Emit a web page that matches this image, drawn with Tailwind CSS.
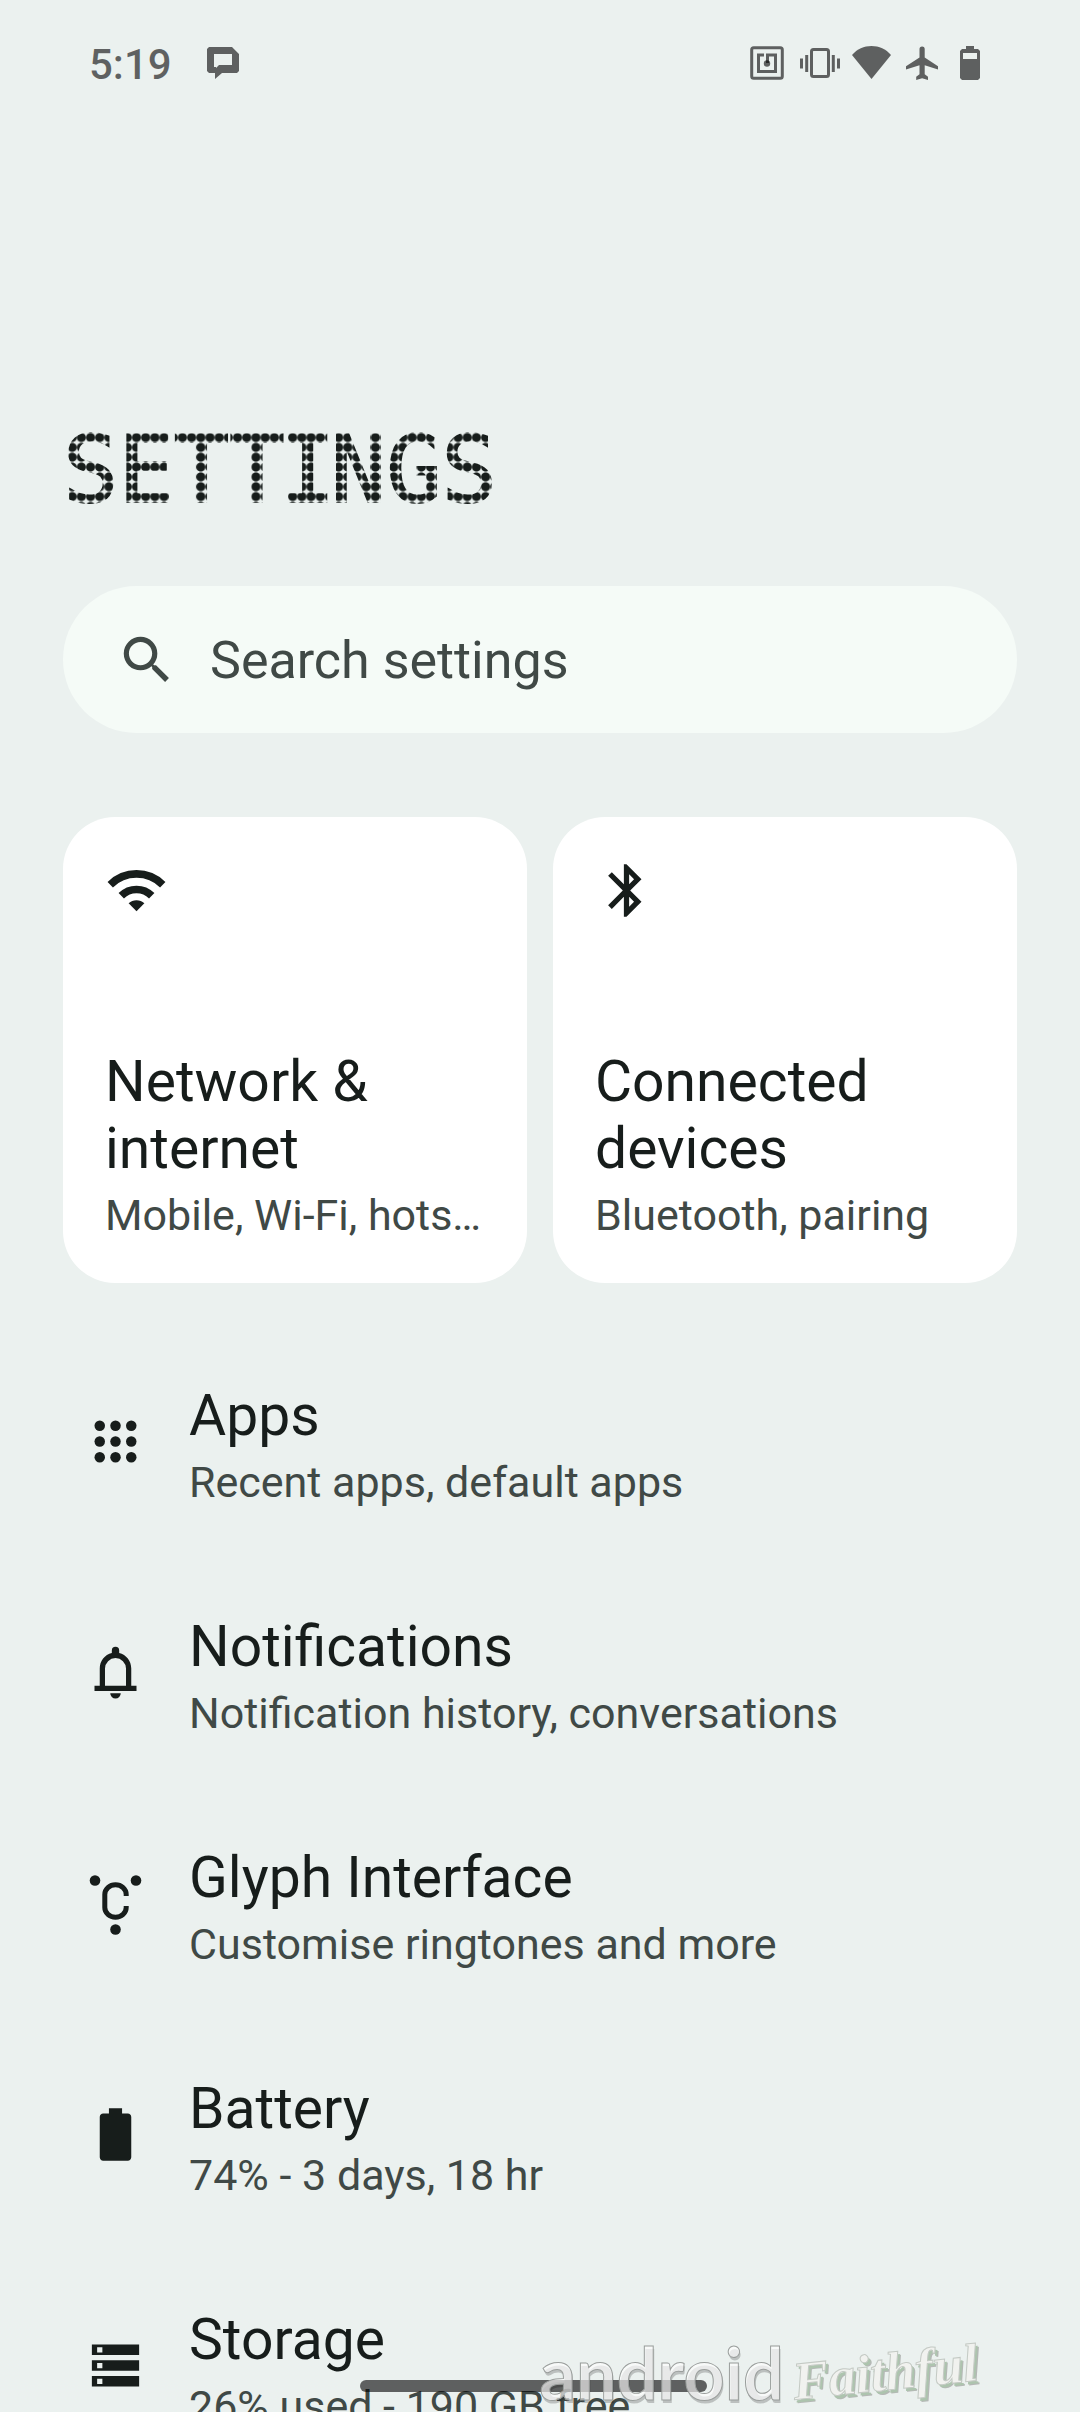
<!DOCTYPE html>
<html lang="en">
  <head>
    <meta charset="UTF-8" />
    <meta name="viewport" content="width=device-width, initial-scale=1.0" />
    <title>Settings</title>
    <script src="https://cdn.jsdelivr.net/npm/@tailwindcss/browser@4"></script>
  </head>
  <body
    class="relative h-screen overflow-hidden bg-[#ebf1ef] font-['Roboto',sans-serif] text-[#171d1b]"
  >
    <!-- Status bar -->
    <header
      class="flex h-[126px] items-center justify-between pr-[100px] pl-[89px] text-black/60"
    >
      <div class="flex items-center gap-[35px]">
        <time class="pt-1 text-[42px] leading-none font-medium">5:19</time>
        <svg class="size-8" viewBox="0 0 32 32" fill="currentColor" fill-rule="evenodd" aria-label="Messages">
          <path d="M2 0h23l7 7v17l-2 2H15l-7 6v-6H2l-2-2V2zM7 7v13h2v1l3-3h13V7z" />
        </svg>
      </div>
      <div class="flex items-center">
        <svg class="mr-4 size-[34px]" viewBox="0 0 34 34" fill="none" stroke="currentColor" stroke-width="3" aria-label="NFC">
          <rect x="1.7" y="1.7" width="30.6" height="30.6" rx="2" />
          <path d="M14 9H8.500v16.500h17V9h-8v8" />
          <circle cx="17" cy="17.500" r="3.200" fill="currentColor" stroke="none" />
        </svg>
        <svg class="mr-3 h-[34px] w-10" viewBox="0 0 40 34" fill="none" stroke="currentColor" stroke-width="3" aria-label="Vibrate">
          <rect x="11.500" y="3.500" width="17" height="27" rx="2" />
          <path d="M6.700 9v17M33.300 9v17M1.500 12.500v10M38.500 12.500v10" />
        </svg>
        <svg class="mr-[15px] h-[34px] w-[39px]" viewBox="0 0 39 34" fill="currentColor" aria-label="Wi-Fi">
          <path d="M19.500 33L0 9C5 3 12 0 19.500 0S34 3 39 9z" />
        </svg>
        <svg class="mr-[22px] h-[34px] w-8" viewBox="0 0 32 34" fill="currentColor" aria-label="Airplane mode">
          <path d="M32 23.500v-3.300L18.700 11.500V3a2.600 2.600 0 0 0-5.200 0v8.500L0 20.200v3.300l13.500-4.300v9l-3.300 2.600V34l5.900-1.800L22 34v-3.200l-3.300-2.600v-9z" />
        </svg>
        <svg class="h-[34px] w-5" viewBox="0 0 20 34" fill="currentColor" fill-rule="evenodd" aria-label="Battery">
          <path d="M6 0h8v3h4l2 2v27l-2 2H2l-2-2V5l2-2h4zM3 7v6h14V7z" />
        </svg>
      </div>
    </header>

    <main class="px-[63px]">
      <!-- Dot-matrix title: a grid of dots clipped to the letters -->
      <h1
        class="mt-[294px] bg-[radial-gradient(circle,#171d1b_4px,transparent_5px)] bg-[length:0.1em_0.107em] bg-[position:-0.05em_0.03em] bg-clip-text font-['DejaVu_Sans_Mono',monospace] text-[92px] leading-[102px] text-transparent [-webkit-text-stroke:2px_transparent]"
      >SETT<span class="-mx-[0.05em]">I</span>NGS</h1>

      <label
        class="mt-16 flex h-[147px] items-center rounded-full bg-[#f5fbf7] pl-[53px] text-[#404946]"
      >
        <svg class="mr-8 size-[62px]" viewBox="0 0 24 24" fill="currentColor" aria-hidden="true">
          <path d="M15.500 14h-.79l-.28-.27A6.471 6.471 0 0 0 16 9.500 6.500 6.500 0 1 0 9.500 16c1.610 0 3.090-.59 4.230-1.570l.27.28v.79l5 4.990L20.490 19l-4.990-5zm-6 0C7.010 14 5 11.990 5 9.500S7.010 5 9.500 5 14 7.010 14 9.500 11.990 14 9.500 14z" />
        </svg>
        <input
          type="search"
          placeholder="Search settings"
          aria-label="Search settings"
          class="min-w-0 flex-1 bg-transparent pt-0.5 text-[52px] outline-none placeholder:text-[#404946]"
        />
      </label>

      <div class="mt-[84px] grid grid-cols-2 gap-[26px]">
        <a href="#network" class="rounded-[52px] bg-white p-[42px]">
          <svg class="size-[63px]" viewBox="0 0 24 24" fill="none" stroke="currentColor" stroke-width="2.900" aria-hidden="true">
            <path d="M2 9.800a14.200 14.200 0 0 1 20 0M6.200 14a8.200 8.200 0 0 1 11.600 0" />
            <path d="M12 19.900l-3-3a4.300 4.300 0 0 1 6 0z" fill="currentColor" stroke="none" />
          </svg>
          <h2 class="mt-[126px] text-[57px] leading-[67px]">Network &amp; internet</h2>
          <p class="mt-[7px] truncate text-[43px] leading-[52px] text-[#404946]">Mobile, Wi-Fi, hotspot</p>
        </a>
        <a href="#devices" class="rounded-[52px] bg-white p-[42px]">
          <svg class="size-[63px]" viewBox="0 0 24 24" fill="currentColor" aria-hidden="true">
            <path d="M17.710 7.710L12 2h-1v7.590L6.410 5 5 6.410 10.590 12 5 17.590 6.410 19 11 14.410V22h1l5.710-5.710-4.300-4.290zM13 5.830l1.880 1.880L13 9.590zm1.880 10.460L13 18.170v-3.760z" />
          </svg>
          <h2 class="mt-[126px] text-[57px] leading-[67px]">Connected devices</h2>
          <p class="mt-[7px] truncate text-[43px] leading-[52px] text-[#404946]">Bluetooth, pairing</p>
        </a>
      </div>

      <nav class="mt-[47px]">
        <a href="#apps" class="flex h-[231px] items-start gap-[42px] px-[21px] pt-[52px]">
          <svg class="mt-7 size-[63px] shrink-0" viewBox="0 0 24 24" fill="currentColor" aria-hidden="true">
            <circle cx="6" cy="6" r="2" />
            <circle cx="12" cy="6" r="2" />
            <circle cx="18" cy="6" r="2" />
            <circle cx="6" cy="12" r="2" />
            <circle cx="12" cy="12" r="2" />
            <circle cx="18" cy="12" r="2" />
            <circle cx="6" cy="18" r="2" />
            <circle cx="12" cy="18" r="2" />
            <circle cx="18" cy="18" r="2" />
          </svg>
          <div>
            <h2 class="text-[57px] leading-[67px]">Apps</h2>
            <p class="mt-[7px] text-[43px] leading-[52px] text-[#404946]">Recent apps, default apps</p>
          </div>
        </a>
        <a href="#notifications" class="flex h-[231px] items-start gap-[42px] px-[21px] pt-[52px]">
          <svg class="mt-7 size-[63px] shrink-0" viewBox="0 0 24 24" fill="currentColor" aria-hidden="true">
            <path d="M18 17v-6.500c0-2.870-1.900-5.270-4.600-5.900V3.600a1.400 1.400 0 0 0-2.800 0v1C7.900 5.230 6 7.630 6 10.500V17H4v2h16v-2zM8 17v-6.500a4 4 0 0 1 8 0V17zM10 19.900h4a2 2 0 0 1-4 0z" />
          </svg>
          <div>
            <h2 class="text-[57px] leading-[67px]">Notifications</h2>
            <p class="mt-[7px] text-[43px] leading-[52px] text-[#404946]">Notification history, conversations</p>
          </div>
        </a>
        <a href="#glyph" class="flex h-[231px] items-start gap-[42px] px-[21px] pt-[52px]">
          <svg class="mt-7 size-[63px] shrink-0" viewBox="0 0 63 63" fill="currentColor" aria-hidden="true">
            <circle cx="11" cy="8.500" r="5.300" />
            <circle cx="52" cy="8.500" r="5.300" />
            <circle cx="31.500" cy="57.500" r="5.300" />
            <path d="M42.200 24v-1.500a10.700 9.700 0 0 0-21.400 0v13a10.700 9.700 0 0 0 21.400 0V34" fill="none" stroke="currentColor" stroke-width="5" />
          </svg>
          <div>
            <h2 class="text-[57px] leading-[67px]">Glyph Interface</h2>
            <p class="mt-[7px] text-[43px] leading-[52px] text-[#404946]">Customise ringtones and more</p>
          </div>
        </a>
        <a href="#battery" class="flex h-[231px] items-start gap-[42px] px-[21px] pt-[52px]">
          <svg class="mt-7 size-[63px] shrink-0" viewBox="0 0 24 24" fill="currentColor" aria-hidden="true">
            <path d="M16.700 4h-2.200V2h-5v2H7.300C6.600 4 6 4.600 6 5.300v15.400c0 .7.600 1.300 1.300 1.300h9.400c.7 0 1.300-.6 1.300-1.300V5.300c0-.7-.6-1.300-1.300-1.300z" />
          </svg>
          <div>
            <h2 class="text-[57px] leading-[67px]">Battery</h2>
            <p class="mt-[7px] text-[43px] leading-[52px] text-[#404946]">74% - 3 days, 18 hr</p>
          </div>
        </a>
        <a href="#storage" class="flex h-[231px] items-start gap-[42px] px-[21px] pt-[52px]">
          <svg class="mt-7 size-[63px] shrink-0" viewBox="0 0 24 24" fill="currentColor" fill-rule="evenodd" aria-hidden="true">
            <path d="M3 4h18v4H3zM5 5v2h2V5zM3 10h18v4H3zM5 11v2h2v-2zM3 16h18v4H3zM5 17v2h2v-2z" />
          </svg>
          <div>
            <h2 class="text-[57px] leading-[67px]">Storage</h2>
            <p class="mt-[7px] text-[43px] leading-[52px] text-[#404946]">26% used - 190 GB free</p>
          </div>
        </a>
      </nav>
    </main>

    <!-- Gesture bar -->
    <div class="absolute bottom-5 left-1/3 h-3 w-[347px] rounded-full bg-black/60"></div>

    <!-- Watermark -->
    <div class="absolute right-[102px] bottom-0 flex items-end gap-2 whitespace-nowrap">
      <span
        class="font-['Lato',sans-serif] text-[72px] leading-[80px] font-bold text-white/65 [-webkit-text-stroke:1px_#9a9e9c] [text-shadow:1px_3px_0_rgb(0_0_0/0.2)]"
      >android</span>
      <span
        class="-rotate-6 font-['Liberation_Serif',serif] text-[54px] leading-[80px] font-bold text-[#f1f2ef] italic [-webkit-text-stroke:1px_#c4cac4] [text-shadow:2px_3px_0_#adc4ae,3px_4px_0_#b5b8b6]"
      >Faithful</span>
    </div>
  </body>
</html>
